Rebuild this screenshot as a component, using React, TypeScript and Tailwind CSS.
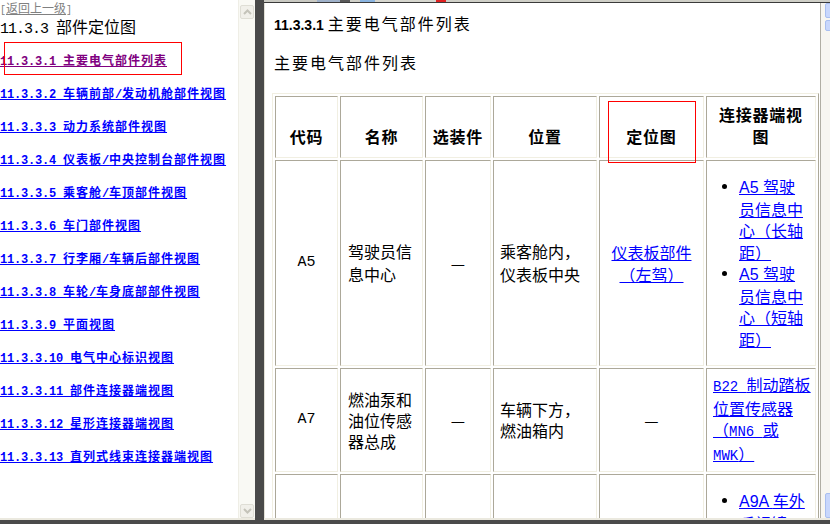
import React from "react";

type Run = { t: string; ascii: boolean };
function runs(text: string): Run[] {
  const out: Run[] = [];
  const re = /[\x00-\x7F]+|[^\x00-\x7F]+/g;
  let m: RegExpExecArray | null;
  while ((m = re.exec(text)) !== null) {
    out.push({ t: m[0], ascii: m[0].charCodeAt(0) < 128 });
  }
  return out;
}

function Mixed({ text, a, c }: { text: string; a: string; c: string }) {
  return (
    <>
      {runs(text).map((r, i) => (
        <span key={i} className={r.ascii ? a : c}>
          {r.t}
        </span>
      ))}
    </>
  );
}

function Lines({ lines, a, c }: { lines: string[]; a: string; c: string }) {
  return (
    <>
      {lines.map((l, i) => (
        <React.Fragment key={i}>
          {i > 0 && <br />}
          <Mixed text={l} a={a} c={c} />
        </React.Fragment>
      ))}
    </>
  );
}

const links = [
  "11.3.3.1 主要电气部件列表",
  "11.3.3.2 车辆前部/发动机舱部件视图",
  "11.3.3.3 动力系统部件视图",
  "11.3.3.4 仪表板/中央控制台部件视图",
  "11.3.3.5 乘客舱/车顶部件视图",
  "11.3.3.6 车门部件视图",
  "11.3.3.7 行李厢/车辆后部件视图",
  "11.3.3.8 车轮/车身底部部件视图",
  "11.3.3.9 平面视图",
  "11.3.3.10 电气中心标识视图",
  "11.3.3.11 部件连接器端视图",
  "11.3.3.12 星形连接器端视图",
  "11.3.3.13 直列式线束连接器端视图",
];

const LA = "font-['Liberation_Mono',monospace] text-[12px] tracking-[-0.2px]";
const LC = "font-['Noto_Sans_CJK_SC',sans-serif] text-[12px] tracking-[1px]";

function SBtn({ up }: { up?: boolean }) {
  return (
    <div className="w-[14px] h-[14px] rounded-[2px] border border-[#dfded5] bg-[#f1f0ea] flex items-center justify-center">
      <svg width="9" height="6" viewBox="0 0 9 6">
        <polyline
          points={up ? "1,5 4.5,1.5 8,5" : "1,1 4.5,4.5 8,1"}
          fill="none"
          stroke="#c4c3b9"
          strokeWidth="2"
        />
      </svg>
    </div>
  );
}

const CELL =
  "border border-[#f1efe2] border-t-[#aca899] border-l-[#aca899] bg-white";
const HEAD =
  "border border-[#f1efe2] border-t-[#aca899] border-l-[#aca899] bg-white flex items-end justify-center text-center pb-[10px] font-bold text-[16px] leading-[22px] tracking-[0.75px] whitespace-nowrap";
const MONO = "font-['Liberation_Mono',monospace] text-[15px]";

function BulletList({ items }: { items: string[][] }) {
  return (
    <ul className="flex flex-col">
      {items.map((lines, i) => (
        <li key={i} className="flex items-start">
          <span className="mt-[8px] w-[5px] h-[5px] rounded-full bg-black shrink-0" />
          <a className="ml-[12px] text-[#0000ff] underline leading-[21.5px] text-[16px] whitespace-nowrap">
            <Lines lines={lines} a="font-['Liberation_Sans',sans-serif]" c="" />
          </a>
        </li>
      ))}
    </ul>
  );
}

export default function App() {
  return (
    <div className="relative w-[830px] h-[524px] overflow-hidden bg-[#4a4a4a] text-black font-['Noto_Sans_CJK_SC',sans-serif]">
      <div className="flex h-[520px]">
        {/* left frame */}
        <div className="flex w-[255px] h-full border-b-2 border-[#ebe9df] bg-white">
          <div className="w-[238px] h-full overflow-hidden">
            <div className="mt-[-1px] h-[14px] leading-[14px] text-[#808080] underline whitespace-nowrap w-fit">
              <Mixed
                text="[返回上一级]"
                a="font-['Liberation_Mono',monospace] text-[10px]"
                c="text-[12px]"
              />
            </div>
            <div className="mt-[3px] h-[20px] leading-[20px] whitespace-nowrap">
              <Mixed
                text="11.3.3 部件定位图"
                a="font-['Liberation_Mono',monospace] text-[15px] tracking-[-1px]"
                c="text-[16px]"
              />
            </div>
            <div className="flex flex-col gap-[20px] mt-[16px]">
              {links.map((l, i) => (
                <a
                  key={i}
                  className={`block w-fit h-[13px] leading-[13px] font-bold underline whitespace-nowrap ${
                    i === 0 ? "text-[#800080]" : "text-[#0000ff]"
                  }`}
                >
                  <Mixed text={l} a={LA} c={LC} />
                </a>
              ))}
            </div>
          </div>
          <div className="w-[17px] h-full bg-[#f9f9f4] border-l border-[#efeee6] flex flex-col items-center justify-between pt-[5px]">
            <SBtn up />
            <SBtn />
          </div>
        </div>

        <div className="w-[9px] shrink-0" />

        {/* right frame */}
        <div className="flex flex-col flex-1 h-full min-w-0">
          <div className="h-[2px] flex">
            <div className="w-[53px] bg-[#c9c9c2]" />
            <div className="w-[23px] bg-[#9fb1c9]" />
            <div className="w-[10px] bg-[#5a5a5a]" />
            <div className="w-[10px] bg-[#d0d0c8]" />
            <div className="w-[15px] bg-[#8ab4e0]" />
            <div className="w-[61px] bg-[#d6d6ce]" />
            <div className="w-[10px] bg-[#e02020]" />
            <div className="flex-1 bg-[#cfcfc7]" />
          </div>
          <div className="h-[1px] bg-[#3a3a3a]" />
          <div className="flex flex-1 min-h-0 border-b-2 border-[#ebe9df]">
            <div className="flex-1 min-w-0 overflow-hidden bg-white border-l border-r border-l-[#e2e0d6] border-r-[#b0aea4] pl-[7px] pt-[9px]">
              <div className="pl-[2px] h-[22px] leading-[22px] whitespace-nowrap">
                <span className="font-['Liberation_Sans',sans-serif] font-bold text-[14px]">
                  11.3.3.1{" "}
                </span>
                <span className="text-[16px] tracking-[2px]">主要电气部件列表</span>
              </div>
              <div className="mt-[17px] pl-[2px] h-[22px] leading-[22px] whitespace-nowrap text-[16px] tracking-[2px]">
                主要电气部件列表
              </div>

              <div className="mt-[20px] w-fit grid grid-cols-[63px_83px_66px_104px_105px_110px] grid-rows-[62px_206px_104px_auto] gap-[2px] p-[2px] border border-[#aca899] border-t-[#f1efe2] border-l-[#f1efe2] text-[16px]">
                {/* header */}
                <div className={HEAD}>代码</div>
                <div className={HEAD}>名称</div>
                <div className={HEAD}>选装件</div>
                <div className={HEAD}>位置</div>
                <div className={HEAD}>定位图</div>
                <div className={HEAD}>
                  连接器端视
                  <br />图
                </div>

                {/* row A5 */}
                <div className={`${CELL} flex items-center justify-center`}>
                  <span className={MONO}>A5</span>
                </div>
                <div className={`${CELL} flex items-center pl-[7px] leading-[23px] whitespace-nowrap`}>
                  <div>
                    驾驶员信
                    <br />
                    息中心
                  </div>
                </div>
                <div className={`${CELL} flex items-center justify-center`}>—</div>
                <div className={`${CELL} flex items-center pl-[6px] leading-[23px] whitespace-nowrap`}>
                  <div>
                    乘客舱内，
                    <br />
                    仪表板中央
                  </div>
                </div>
                <div className={`${CELL} flex items-center justify-center text-center leading-[22px] whitespace-nowrap`}>
                  <a className="text-[#0000ff] underline">
                    仪表板部件
                    <br />
                    （左驾）
                  </a>
                </div>
                <div className={`${CELL} flex flex-col justify-center pl-[15px]`}>
                  <BulletList
                    items={[
                      ["A5 驾驶", "员信息中", "心（长轴", "距）"],
                      ["A5 驾驶", "员信息中", "心（短轴", "距）"],
                    ]}
                  />
                </div>

                {/* row A7 */}
                <div className={`${CELL} flex items-center justify-center`}>
                  <span className={MONO}>A7</span>
                </div>
                <div className={`${CELL} flex items-center pl-[7px] leading-[21px] whitespace-nowrap`}>
                  <div>
                    燃油泵和
                    <br />
                    油位传感
                    <br />
                    器总成
                  </div>
                </div>
                <div className={`${CELL} flex items-center justify-center`}>—</div>
                <div className={`${CELL} flex items-center pl-[6px] leading-[21px] whitespace-nowrap`}>
                  <div>
                    车辆下方，
                    <br />
                    燃油箱内
                  </div>
                </div>
                <div className={`${CELL} flex items-center justify-center`}>—</div>
                <div className={`${CELL} flex items-center pl-[6px] leading-[21px] whitespace-nowrap`}>
                  <a className="text-[#0000ff] underline">
                    <Lines
                      lines={["B22 制动踏板", "位置传感器", "（MN6 或", "MWK）"]}
                      a="font-['Liberation_Mono',monospace] text-[14px]"
                      c=""
                    />
                  </a>
                </div>

                {/* row A9A */}
                <div className={CELL} />
                <div className={CELL} />
                <div className={CELL} />
                <div className={CELL} />
                <div className={CELL} />
                <div className={`${CELL} pl-[15px] pt-[15px] pb-[16px]`}>
                  <BulletList
                    items={[
                      ["A9A 车外", "后视镜", "（驾驶员", "侧）"],
                      ["A9B 车外", "后视镜", "（乘客", "侧）"],
                    ]}
                  />
                </div>
              </div>
            </div>
            <div className="w-[9px] bg-[#f7f6f1] overflow-hidden flex flex-col justify-between">
              <div className="flex flex-col gap-[2px]">
                <div className="ml-[4px] w-[12px] h-[15px] bg-[#c8d7fc] border border-[#a9bff0] rounded-[2px]" />
                <div className="ml-[4px] w-[12px] h-[11px] bg-[#c8d7fc] border border-[#a9bff0] rounded-[2px]" />
              </div>
              <div className="ml-[4px] w-[12px] h-[25px] bg-[#c8d7fc] border border-[#a9bff0] rounded-[2px]" />
            </div>
          </div>
        </div>
      </div>

      {/* red annotation boxes */}
      <div className="absolute left-[4px] top-[42px] w-[178px] h-[33px] border border-[#ff0000]" />
      <div className="absolute left-[608px] top-[101px] w-[88px] h-[62px] border border-[#ff0000]" />
    </div>
  );
}
